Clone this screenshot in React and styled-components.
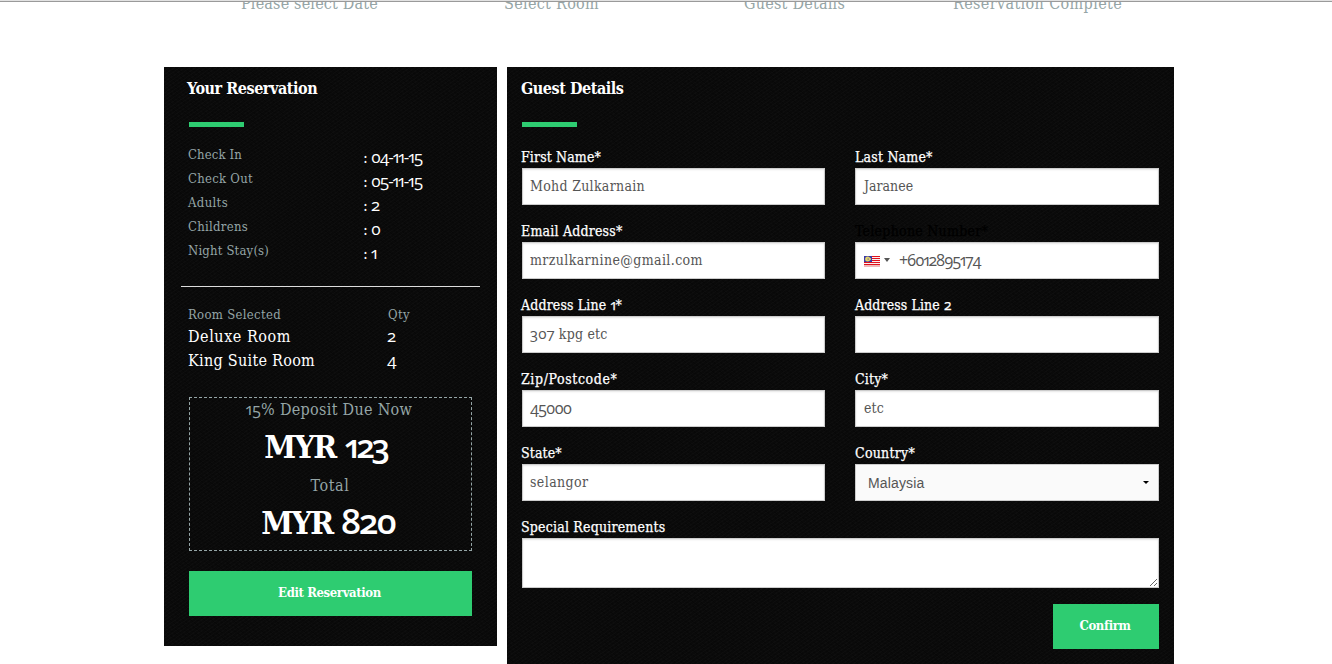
import React from "react";
import styled, { createGlobalStyle } from "styled-components";

const GlobalStyle = createGlobalStyle`
  * { box-sizing: border-box; }
  body {
    margin: 0;
    background: #fff;
    font-family: "DejaVu Serif Condensed", "DejaVu Serif", serif;
    overflow: hidden;
  }
`;

const Page = styled.div`
  width: 1332px;
  height: 664px;
  overflow: hidden;
`;

const Steps = styled.header`
  height: 67px;
  border-top: 1px solid #e2e2e2;
  padding-left: 241px;
  display: grid;
  grid-template-columns: 263px 240px 209px 1fr;
  box-shadow: inset 0 1px 0 #9a9a9a;
`;

const Step = styled.span`
  height: 30px;
  margin-top: 1px;
  overflow: hidden;
  color: #95a5a6;
  font-size: 16px;
  line-height: 20px;
  letter-spacing: ${(p) => p.$track}px;
  white-space: nowrap;

  span {
    display: block;
    margin-top: -8px;
  }
`;

const Columns = styled.main`
  display: flex;
  align-items: flex-start;
  gap: 10px;
  padding-left: 164px;
`;

const Panel = styled.section`
  width: ${(p) => p.$width}px;
  height: ${(p) => p.$height}px;
  padding: ${(p) => p.$pad};
  background-color: #0a0a0a;
  background-image:
    repeating-linear-gradient(145deg, rgba(255, 255, 255, 0.014) 0 1px, transparent 1px 3px),
    repeating-linear-gradient(35deg, rgba(0, 0, 0, 0.2) 0 1px, transparent 1px 4px);
`;

const Title = styled.h2`
  margin: 0 0 0 ${(p) => p.$shift}px;
  height: 55px;
  padding-top: 12px;
  color: #fff;
  font-size: 16px;
  line-height: 20px;
  letter-spacing: -0.45px;
`;

const Accent = styled.div`
  width: 55px;
  height: 5px;
  background: #2ecc71;
`;

const Text = styled.span`
  display: inline-block;
  white-space: nowrap;
  letter-spacing: ${(p) => p.$track || 0}px;
`;

const Num = styled.span`
  display: inline-block;
  line-height: 1;
  margin-left: ${(p) => p.$gap || 0}px;
  font-family: "Open Sans", sans-serif;
  font-variant-numeric: oldstyle-nums proportional-nums;
  font-size: ${(p) => (p.$size ? `${p.$size}px` : "1em")};
  font-weight: ${(p) => p.$weight || "inherit"};
  letter-spacing: ${(p) => p.$track || 0}px;
`;

const StayList = styled.div`
  margin-top: 16px;
`;

const StayRow = styled.div`
  display: grid;
  grid-template-columns: 175px 1fr;
  height: 24px;
  line-height: 24px;
  margin-left: -1px;
`;

const Muted = styled.span`
  color: #95a5a6;
  font-size: 13px;
  letter-spacing: ${(p) => p.$track}px;
  white-space: nowrap;
`;

const StayValue = styled.span`
  color: #fff;
  padding-top: 3px;
  font-size: 16px;
  white-space: nowrap;
`;

const Divider = styled.div`
  width: 299px;
  height: 1px;
  margin: 23px 0 16px -8px;
  background: #ddd;
`;

const RoomRow = styled.div`
  display: grid;
  grid-template-columns: 200px 1fr;
  height: ${(p) => p.$height || 24}px;
  line-height: 24px;
  margin-left: -1px;
  color: #fff;
  font-size: 16px;
`;

const Quantity = styled(Num)`
  line-height: 22px;
`;

const Totals = styled.div`
  width: 283px;
  height: 154px;
  margin: 24px 0 20px;
  border: 1px dashed #95a5a6;
  text-align: center;
`;

const TotalLabel = styled.div`
  height: 25px;
  line-height: 24px;
  color: #95a5a6;
  font-size: 16px;
  letter-spacing: ${(p) => p.$track || 0.3}px;
  padding-right: ${(p) => p.$nudge || 0}px;
`;

const Amount = styled.div`
  height: 51px;
  line-height: 49px;
  color: #fff;
  font-size: 32px;
  font-weight: 700;
  letter-spacing: -1.6px;
  padding-right: ${(p) => p.$nudge || 0}px;
`;

const Button = styled.button`
  display: block;
  width: ${(p) => p.$width}px;
  height: 45px;
  padding: 0 2px 2px 0;
  border: 0;
  background: #2ecc71;
  color: #fff;
  font: 700 13px "DejaVu Serif Condensed", "DejaVu Serif", serif;
  letter-spacing: -0.38px;
`;

const Form = styled.form`
  display: grid;
  grid-template-columns: 303px 304px;
  column-gap: 30px;
  margin-top: 20px;
`;

const Field = styled.label`
  display: block;
  height: ${(p) => (p.$wide ? 84 : 74)}px;
  grid-column: ${(p) => (p.$wide ? "1 / -1" : "auto")};
`;

const FieldLabel = styled.span`
  display: block;
  height: 21px;
  margin-left: ${(p) => (p.$right ? 0 : -1)}px;
  line-height: 20px;
  color: ${(p) => (p.$dark ? "#000" : "#fff")};
  -webkit-text-stroke: 0.25px currentColor;
  font-size: 14px;
  white-space: nowrap;
`;

const Input = styled.div`
  display: flex;
  align-items: center;
  height: 37px;
  padding: 0 8px 1px ${(p) => (p.$right ? 8 : 7)}px;
  border: 1px solid #ccc;
  background: #fff;
  box-shadow: inset 0 1px 2px rgba(0, 0, 0, 0.1);
  color: #555;
  font-size: 14px;
`;

const Select = styled(Input)`
  justify-content: space-between;
  padding: 0 9px 0 12px;
  background: #fafafa;
  box-shadow: none;
  font-family: "Liberation Sans", Arial, sans-serif;
`;

const InputNum = styled(Num)`
  padding-bottom: 1px;
`;

const TextArea = styled.textarea`
  display: block;
  width: 100%;
  height: 50px;
  border: 1px solid #ccc;
  box-shadow: inset 0 1px 2px rgba(0, 0, 0, 0.1);
  background: #fff;
  resize: vertical;
`;

const Caret = styled.i`
  border: 3px solid transparent;
  border-top: ${(p) => p.$h}px solid ${(p) => p.$color};
  border-bottom: 0;
  margin: ${(p) => p.$margin || 0};
`;

const Actions = styled.div`
  display: flex;
  justify-content: flex-end;
  margin-top: 3px;
`;

const FlagIcon = styled.svg`
  flex: none;
  width: 16px;
  height: 12px;
  margin-top: 4px;
`;

const Flag = () => (
  <FlagIcon viewBox="0 0 16 12">
    <rect width="16" height="11" fill="#fbeeee" />
    {[0, 2, 4, 6, 8].map((y) => (
      <rect key={y} y={y} width="16" height="1" fill="#e0101c" />
    ))}
    <rect y="9" width="16" height="2" fill="#eebaba" />
    <rect width="8" height="6" fill="#3a3aa6" />
    <circle cx="3.6" cy="3.1" r="2.5" fill="#e3d36a" />
    <circle cx="4.3" cy="3.1" r="0.9" fill="#77739a" />
    <circle cx="5.8" cy="3" r="1.2" fill="#e3d36a" />
  </FlagIcon>
);

const stay = [
  ["Check In", "04-11-15", 0.13],
  ["Check Out", "05-11-15", 0.27],
  ["Adults", "2", 0.35],
  ["Childrens", "0", 0.28],
  ["Night Stay(s)", "1", 0.17],
];

function TextField({ label, track, dark, right, children }) {
  return (
    <Field>
      <FieldLabel $dark={dark} $right={right}>
        <Text $track={track}>{label}</Text>
      </FieldLabel>
      {children}
    </Field>
  );
}

export default function App() {
  return (
    <Page>
      <GlobalStyle />
      <Steps>
        <Step $track={0.18}><span>Please select Date</span></Step>
        <Step $track={0.3}><span>Select Room</span></Step>
        <Step $track={0.23}><span>Guest Details</span></Step>
        <Step $track={0.37}><span>Reservation Complete</span></Step>
      </Steps>
      <Columns>
        <Panel $width={333} $height={579} $pad="0 0 0 25px">
          <Title $shift={-2}>Your Reservation</Title>
          <Accent />
          <StayList>
            {stay.map(([name, value, track]) => (
              <StayRow key={name}>
                <Muted $track={track}>{name}</Muted>
                <StayValue>
                  : <Num $gap={-1.5} $size={17} $track={-1.1} $weight={500}>{value}</Num>
                </StayValue>
              </StayRow>
            ))}
          </StayList>
          <Divider />
          <RoomRow $height={22}>
            <Muted $track={0.31}>Room Selected</Muted>
            <Muted $track={0.36}>Qty</Muted>
          </RoomRow>
          <RoomRow>
            <Text $track={0.55}>Deluxe Room</Text>
            <Quantity $gap={-1} $size={17} $weight={500}>2</Quantity>
          </RoomRow>
          <RoomRow>
            <Text $track={0.28}>King Suite Room</Text>
            <Quantity $gap={-1} $size={17} $weight={500}>4</Quantity>
          </RoomRow>
          <Totals>
            <TotalLabel $nudge={3}><Num>15</Num>% Deposit Due Now</TotalLabel>
            <Amount $nudge={10}>MYR <Num $gap={1} $size={33} $track={-3} $weight={600}>123</Num></Amount>
            <TotalLabel $nudge={1} $track={0.6}>Total</TotalLabel>
            <Amount $nudge={5}>MYR <Num $size={35} $track={-2.2} $weight={600}>820</Num></Amount>
          </Totals>
          <Button $width={283}>Edit Reservation</Button>
        </Panel>
        <Panel $width={667} $height={620} $pad="0 15px">
          <Title $shift={-1}>Guest Details</Title>
          <Accent />
          <Form>
            <TextField label="First Name*" track={0.13}>
              <Input><Text $track={0.3}>Mohd Zulkarnain</Text></Input>
            </TextField>
            <TextField label="Last Name*" track={0.2} right>
              <Input $right><Text>Jaranee</Text></Input>
            </TextField>
            <TextField label="Email Address*" track={0.2}>
              <Input><Text $track={0.39}>mrzulkarnine@gmail.com</Text></Input>
            </TextField>
            <TextField label="Telephone Number*" track={0.27} dark right>
              <Input $right>
                <Flag />
                <Caret $h={4} $color="#555" $margin="0 9px 0 4px" />
                <InputNum $size={16} $track={-1.1}>+6012895174</InputNum>
              </Input>
            </TextField>
            <TextField label={<>Address Line <Num $track={-0.5}>1</Num>*</>} track={0.15}>
              <Input><Text $track={0.2}><InputNum $size={15}>307</InputNum> kpg etc</Text></Input>
            </TextField>
            <TextField label={<>Address Line <Num>2</Num></>} track={0.1} right>
              <Input />
            </TextField>
            <TextField label="Zip/Postcode*" track={0.6}>
              <Input><InputNum $size={16} $track={-1}>45000</InputNum></Input>
            </TextField>
            <TextField label="City*" track={0.17} right>
              <Input $right><Text $track={0.14}>etc</Text></Input>
            </TextField>
            <TextField label="State*" track={0.1}>
              <Input><Text $track={0.4}>selangor</Text></Input>
            </TextField>
            <TextField label="Country*" track={0.26} right>
              <Select>
                <Text $track={0.15}>Malaysia</Text>
                <Caret $h={3} $color="#000" />
              </Select>
            </TextField>
            <Field $wide>
              <FieldLabel><Text $track={0.2}>Special Requirements</Text></FieldLabel>
              <TextArea />
            </Field>
          </Form>
          <Actions>
            <Button type="button" $width={106}>Confirm</Button>
          </Actions>
        </Panel>
      </Columns>
    </Page>
  );
}
